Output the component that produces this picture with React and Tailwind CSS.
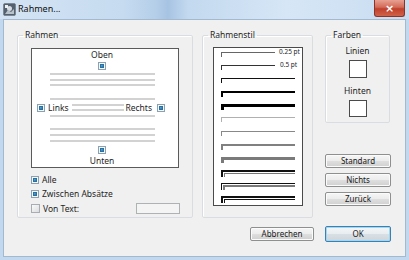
import React from "react";

function Chk({ on = true }) {
  if (on) {
    return (
      <span className="block w-[8px] h-[8px] shrink-0 border border-[#8aa0b3] bg-[#f4f8fb] p-[1px]">
        <span className="block w-full h-full bg-[linear-gradient(135deg,#8fd0f0_0%,#3d95cc_45%,#1b5f94_100%)] shadow-[inset_0_0_0_1px_#2d6f9c]" />
      </span>
    );
  }
  return (
    <span className="block w-[9px] h-[9px] shrink-0 border border-[#a7adb3] bg-[linear-gradient(135deg,#fbfbfb,#dadcde)]" />
  );
}

function Btn({ children, w, def }) {
  return (
    <div
      className={
        "h-[14px] flex items-center justify-center rounded-[2px] text-[8px] leading-none text-[#1a1a1a] bg-[linear-gradient(#f6f6f6_0%,#ececec_48%,#dedede_52%,#d0d0d0_100%)] " +
        (def
          ? "border border-[#3c7fb1] shadow-[inset_0_0_0_1px_#a6dcf5]"
          : "border border-[#8e8f8f] shadow-[inset_0_0_0_1px_#fbfbfb]") +
        " " +
        w
      }
    >
      {children}
    </div>
  );
}

function Gline() {
  return <div className="h-[2px] w-[105px] bg-[#d2d2d2]" />;
}

function Legend({ children }) {
  return (
    <legend className="ml-[5px] px-[2px] text-[8.5px] leading-[10px] text-[#1e1e1e]">
      {children}
    </legend>
  );
}

export default function App() {
  return (
    <div className="w-[409px] h-[260px] overflow-hidden bg-[#c2d8ee] font-['Noto_Sans',sans-serif] text-[#1e1e1e]">
      {/* title bar */}
      <div className="h-[19px] flex items-start bg-[linear-gradient(90deg,#d4e4f4_0%,#c6dbf0_30%,#b5cfe9_38%,#a7c3e3_41%,#c3d9ef_46%,#d6e6f6_70%,#c9ddf1_100%)]">
        <div className="mt-[3px] ml-[3px] w-[13px] h-[13px] rounded-[2px] bg-[#3e4a58] border border-[#7b8896] flex items-center justify-center">
          <svg width="11" height="11" viewBox="0 0 11 11">
            <rect x="0" y="0" width="11" height="11" fill="#55616e" />
            <circle cx="5.5" cy="4.5" r="2.5" fill="#d8dde3" />
            <path d="M1 10 L4 6 L7 8 L10 5 L10 10 Z" fill="#b7c2cc" />
            <rect x="1" y="1" width="3" height="3" fill="#eef1f4" />
          </svg>
        </div>
        <div className="ml-[2px] mt-[3px] text-[9px] leading-[12px] text-[#101010]">Rahmen...</div>
        <div className="flex-1" />
        <div className="mr-[4px] w-[31px] h-[17px] rounded-b-[3px] border border-t-0 border-[#8a3328] bg-[linear-gradient(#e8a092_0%,#d46a58_45%,#c0402c_55%,#d0624a_100%)] flex items-center justify-center">
          <span className="text-white text-[11px] font-bold leading-none font-['DejaVu_Sans',sans-serif]">×</span>
        </div>
      </div>

      {/* content */}
      <div className="mx-[3px] h-[238px] bg-[#f0f0f0] border border-[#a3b9d0] flex flex-col">
        <div className="flex pl-[13px] pt-[10px]">
          {/* Rahmen group */}
          <fieldset className="w-[176px] h-[188px] border border-[#d9dde1] rounded-[2px] shadow-[inset_1px_1px_0_#fff] shrink-0">
            <Legend>Rahmen</Legend>
            <div className="ml-[13px] mt-[8px] w-[148px] h-[120px] bg-white border border-[#5a5a5a] flex flex-col items-center pr-[6px] text-[8.5px] leading-[10px]">
              <div className="mt-[0px] h-[11px] leading-[11px]">Oben</div>
              <div className="mt-[2px]"><Chk /></div>
              <div className="mt-[3px]"><Gline /></div>
              <div className="mt-[4px]"><Gline /></div>
              <div className="mt-[3px]"><Gline /></div>
              <div className="mt-[12px]"><Gline /></div>
              <div className="mt-[3px] w-full flex items-center pl-[5px] pr-[7px] h-[9px]">
                <Chk />
                <span className="ml-[3px]">Links</span>
                <div className="ml-[3px] flex-1 flex flex-col gap-[3px]">
                  <div className="h-[2px] bg-[#d2d2d2]" />
                  <div className="h-[2px] bg-[#d2d2d2]" />
                </div>
                <span className="ml-[1px]">Rechts</span>
                <span className="ml-[5px]"><Chk /></span>
              </div>
              <div className="mt-[3px]"><Gline /></div>
              <div className="mt-[11px]"><Gline /></div>
              <div className="mt-[4px]"><Gline /></div>
              <div className="mt-[4px]"><Gline /></div>
              <div className="mt-[4px]"><Chk /></div>
              <div className="mt-[1px] h-[11px] leading-[11px]">Unten</div>
            </div>
            <div className="ml-[13px] mt-[7px] flex flex-col gap-[5px] text-[8.5px] leading-[10px]">
              <div className="flex items-center h-[9px]"><Chk /><span className="ml-[3px]">Alle</span></div>
              <div className="flex items-center h-[9px]"><Chk /><span className="ml-[3px]">Zwischen Absätze</span></div>
              <div className="flex items-center h-[11px]">
                <Chk on={false} />
                <span className="ml-[3px]">Von Text:</span>
                <div className="flex-1" />
                <div className="mr-[12px] w-[44px] h-[11px] border border-[#adb2b5] bg-[#f4f4f4]" />
              </div>
            </div>
          </fieldset>

          {/* Rahmenstil group */}
          <fieldset className="ml-[9px] w-[111px] h-[188px] border border-[#d9dde1] rounded-[2px] shadow-[inset_1px_1px_0_#fff] shrink-0">
            <Legend>Rahmenstil</Legend>
            <div className="ml-[10px] mt-[7px] w-[90px] h-[159px] bg-white border border-[#4a4a4a] pt-[4px] pl-[7px]">
              <div className="h-[13.1px] flex items-start">
                <div className="w-[54px] h-[5px] border-t border-l border-[#666]" />
                <span className="ml-[4px] -mt-[4px] text-[6.5px] leading-[8px]">0.25 pt</span>
              </div>
              <div className="h-[13.1px] flex items-start">
                <div className="w-[54px] h-[5px] border-t border-l border-[#333]" />
                <span className="ml-[5px] -mt-[4px] text-[6.5px] leading-[8px]">0.5 pt</span>
              </div>
              <div className="h-[13.1px]"><div className="w-[74px] h-[5px] border-t border-l border-[#111]" /></div>
              <div className="h-[13.1px]"><div className="w-[74px] h-[6px] border-t-[2px] border-l-[2px] border-[#000]" /></div>
              <div className="h-[13.1px]"><div className="w-[74px] h-[6px] border-t-[3px] border-l-[3px] border-[#000]" /></div>
              <div className="h-[13.1px]"><div className="w-[74px] h-[5px] border-t border-l border-[#b0b0b0]" /></div>
              <div className="h-[13.1px]"><div className="w-[74px] h-[5px] border-t border-l border-[#888]" /></div>
              <div className="h-[13.1px]"><div className="w-[74px] h-[6px] border-t-[2px] border-l-[2px] border-[#808080]" /></div>
              <div className="h-[13.1px]"><div className="w-[74px] h-[6px] border-t-[3px] border-l-[3px] border-[#7a7a7a]" /></div>
              <div className="h-[13.1px]">
                <div className="w-[74px] h-[7px] border-t-[2px] border-l-[2px] border-[#111] flex">
                  <div className="mt-[1px] ml-[1px] flex-1 border-t border-l border-[#777]" />
                </div>
              </div>
              <div className="h-[13.1px]">
                <div className="w-[74px] h-[7px] border-t border-l border-[#111] flex">
                  <div className="mt-[1px] ml-[1px] flex-1 border-t-[2px] border-l-[2px] border-[#7a7a7a]" />
                </div>
              </div>
              <div className="h-[13.1px]">
                <div className="w-[74px] h-[7px] border-t-[2px] border-l-[2px] border-[#111] flex">
                  <div className="mt-[1px] ml-[1px] flex-1 border-t border-l border-[#111]" />
                </div>
              </div>
            </div>
          </fieldset>

          {/* right column */}
          <div className="ml-[12px] w-[66px] flex flex-col shrink-0">
            <fieldset className="w-[65px] h-[93px] border border-[#d9dde1] rounded-[2px] shadow-[inset_1px_1px_0_#fff] flex flex-col items-center">
              <Legend>Farben</Legend>
              <div className="mt-[6px] text-[8.5px] leading-[10px]">Linien</div>
              <div className="mt-[4px] w-[18px] h-[18px] bg-white border border-[#4a4a4a]" />
              <div className="mt-[8px] text-[8.5px] leading-[10px]">Hinten</div>
              <div className="mt-[4px] w-[18px] h-[17px] bg-white border border-[#4a4a4a]" />
            </fieldset>
            <div className="mt-[31px] flex flex-col gap-[5px]">
              <Btn w="w-[66px]">Standard</Btn>
              <Btn w="w-[66px]">Nichts</Btn>
              <Btn w="w-[66px]">Zurück</Btn>
            </div>
          </div>
        </div>

        <div className="mt-[9px] flex justify-end pr-[14px] gap-[11px]">
          <Btn w="w-[64px]">Abbrechen</Btn>
          <div className="h-[15px] -mt-[1px]">
            <div className="w-[66px] h-[16px] flex items-center justify-center rounded-[2px] text-[8px] leading-none text-[#1a1a1a] border border-[#3c7fb1] shadow-[inset_0_0_0_1px_#9fd8f3] bg-[linear-gradient(#f4f7f9_0%,#e8edf0_48%,#d9e0e5_52%,#cdd6dc_100%)]">OK</div>
          </div>
        </div>
      </div>
    </div>
  );
}
